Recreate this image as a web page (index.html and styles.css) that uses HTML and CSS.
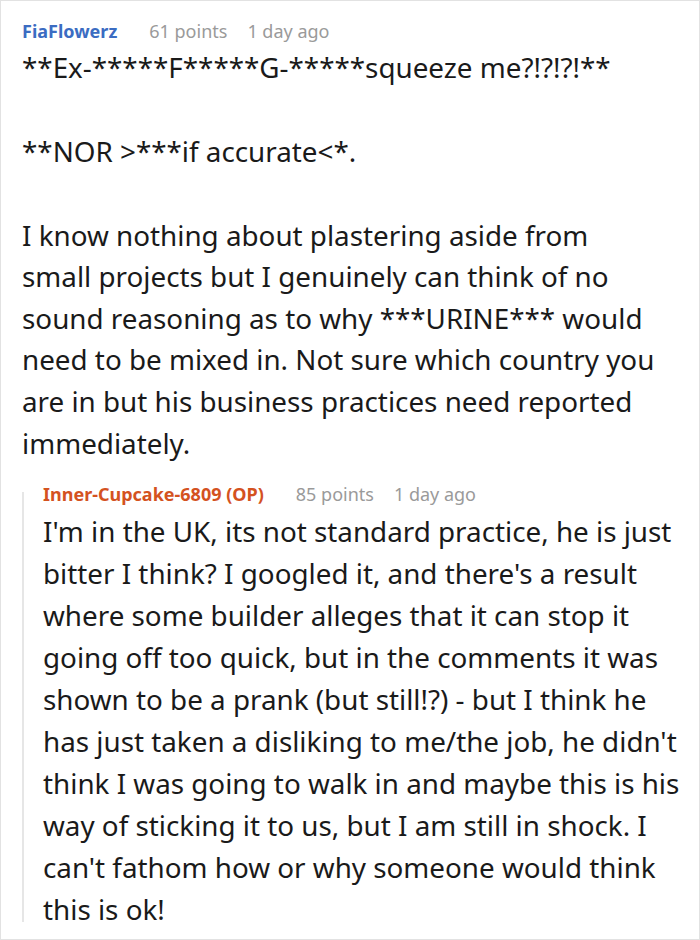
FILE: index.html
```html
<!DOCTYPE html>
<html lang="en">
<head>
<meta charset="utf-8">
<title>Comment</title>
<link rel="stylesheet" href="styles.css">
</head>
<body>
<div class="frame">
  <div class="comment">
    <div class="meta">
      <span class="author">FiaFlowerz</span>
      <span class="points">61 points</span>
      <span class="time">1 day ago</span>
    </div>
    <div class="body main-body">
      <p>**Ex-*****F*****G-*****squeeze me?!?!?!**</p>
      <p>**NOR &gt;***if accurate&lt;*.</p>
      <p>I know nothing about plastering aside from small projects but I genuinely can think of no sound reasoning as to why ***URINE*** would need to be mixed in. Not sure which country you are in but his business practices need reported immediately.</p>
    </div>
    <div class="reply">
      <div class="rail"></div>
      <div class="reply-main">
        <div class="meta">
          <span class="author op">Inner-Cupcake-6809 (OP)</span>
          <span class="points">85 points</span>
          <span class="time">1 day ago</span>
        </div>
        <div class="body reply-body">
          <p>I'm in the UK, its not standard practice, he is just bitter I think? I googled it, and there's a result where some builder alleges that it can stop it going off too quick, but in the comments it was shown to be a prank (but still!?) - but I think he has just taken a disliking to me/the job, he didn't think I was going to walk in and maybe this is his way of sticking it to us, but I am still in shock. I can't fathom how or why someone would think this is ok!</p>
        </div>
      </div>
    </div>
  </div>
</div>
</body>
</html>
```
FILE: styles.css
```css
html, body {
  margin: 0;
  padding: 0;
  background: #ffffff;
}
.frame {
  box-sizing: border-box;
  width: 700px;
  height: 940px;
  border: 1px solid #e2e2e2;
  overflow: hidden;
  font-family: "Noto Sans", "Open Sans", sans-serif;
  color: #1a1a1a;
}
.comment {
  padding: 18px 0 0 21px;
}
.meta {
  display: flex;
  align-items: baseline;
  font-size: 18px;
  line-height: 24.5px;
  white-space: nowrap;
}
.author {
  font-weight: 700;
  color: #3b6cc2;
}
.author.op {
  color: #d4521f;
}
.points, .time {
  color: #9a9a9a;
}
.points {
  margin-left: 32px;
}
.time {
  margin-left: 20px;
}
.body {
  margin-top: 3px;
  font-size: 27.8px;
  line-height: 41.6px;
}
.main-body {
  width: 637px;
}
.body p {
  margin: 0 0 42.5px;
}
.body p:last-child {
  margin-bottom: 0;
}
.reply {
  display: flex;
  margin-top: 18px;
}
.rail {
  flex: 0 0 2px;
  background: #e6e6e6;
  margin: 10px 19px 8px 0;
}
.reply-main {
  flex: 1;
  min-width: 0;
}
.reply-body {
  line-height: 42px;
}
```
